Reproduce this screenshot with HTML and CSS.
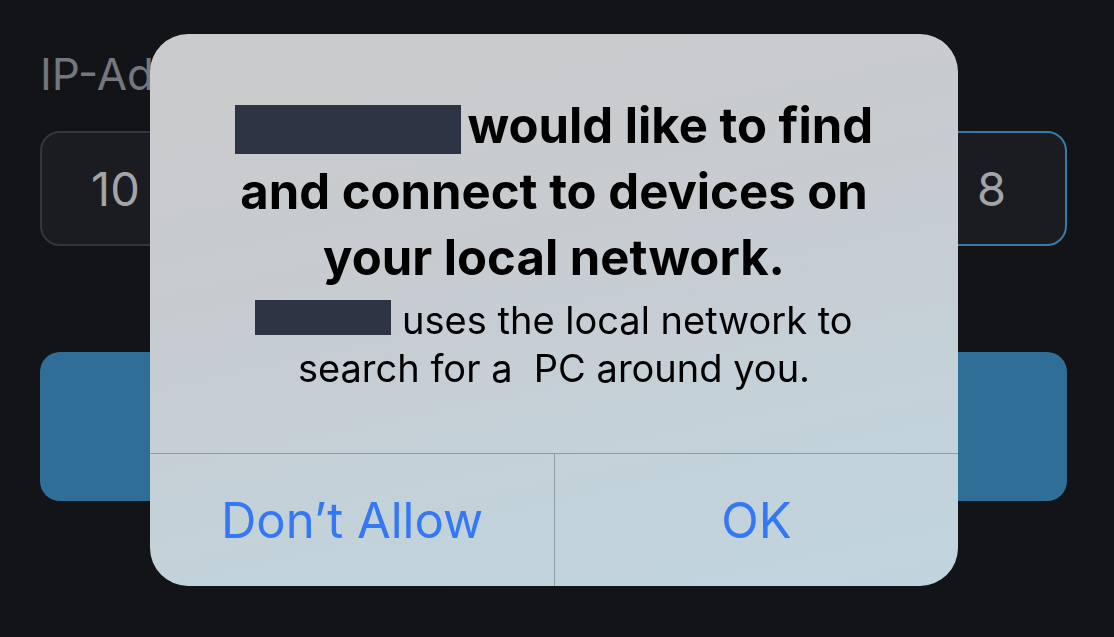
FILE: index.html
```html
<!DOCTYPE html>
<html lang="en">
<head>
  <meta charset="UTF-8">
  <title>Local Network Permission</title>
  <link rel="stylesheet" href="styles.css">
</head>
<body>

  <!-- Form behind the alert -->
  <div class="form">
    <label class="field-label">IP-Address</label>
    <div class="ip-row">
      <div class="ip-box">10</div>
      <div class="ip-box">0</div>
      <div class="ip-box">0</div>
      <div class="ip-box focused">8</div>
    </div>
    <button class="connect">Connect</button>
  </div>

  <!-- System alert -->
  <div class="overlay">
    <div class="alert">
      <div class="alert-body">
        <div class="alert-title"><span class="redact redact-title"></span> would like to find and connect to devices on your local network.</div>
        <div class="alert-message"><span class="redact redact-msg"></span> uses the local network to search for a&nbsp; PC around you.</div>
      </div>
      <div class="alert-actions">
        <button class="alert-btn">Don’t Allow</button>
        <button class="alert-btn">OK</button>
      </div>
    </div>
  </div>

</body>
</html>
```

FILE: styles.css
```css
* {
  box-sizing: border-box;
}

html, body {
  margin: 0;
  height: 100%;
}

body {
  font-family: Inter, "Noto Sans", sans-serif;
  background: #121418;
  overflow: hidden;
}

.form {
  padding: 48px 47px 0 40px;
  display: flex;
  flex-direction: column;
}

.field-label {
  font-size: 44px;
  color: #74777d;
  line-height: 52px;
}

.ip-row {
  margin-top: 31px;
  display: grid;
  grid-template-columns: repeat(4, 151px);
  justify-content: space-between;
}

.ip-box {
  height: 115px;
  border: 2px solid #33363d;
  border-radius: 20px;
  background: #1a1c22;
  color: #a2a4a8;
  font-size: 47px;
  display: flex;
  align-items: center;
  justify-content: center;
}

.ip-box.focused {
  border-color: #3b7aa6;
}

.connect {
  margin-top: 106px;
  height: 149px;
  border: none;
  border-radius: 20px;
  background: #2f6e96;
  color: #ffffff;
  font-family: inherit;
  font-size: 44px;
}

.overlay {
  position: fixed;
  inset: 0;
}

.alert {
  margin: 34px 0 0 150px;
  width: 808px;
  height: 552px;
  border-radius: 38px;
  overflow: hidden;
  background: linear-gradient(168deg, #cbcbcd 0%, #c8cbcf 35%, #c3d2da 75%, #c1d4dd 100%);
  display: flex;
  flex-direction: column;
}

.alert-body {
  height: 420px;
  padding: 59px 76px 0;
  text-align: center;
  color: #000;
  border-bottom: 1px solid #8f9ba3;
}

.alert-title {
  font-size: 49px;
  font-weight: 700;
  line-height: 66px;
}

.alert-message {
  margin-top: 5px;
  font-size: 38px;
  line-height: 48px;
}

.redact {
  display: inline-block;
  background: #2d3545;
  vertical-align: middle;
}

.redact-title {
  width: 226px;
  height: 49px;
  margin-right: -5px;
}

.redact-msg {
  width: 136px;
  height: 35px;
  margin-top: -12px;
}

.alert-actions {
  flex: 1;
  display: grid;
  grid-template-columns: 1fr 1fr;
}

.alert-btn {
  border: none;
  background: transparent;
  color: #3478f6;
  font-family: inherit;
  font-size: 49px;
  padding: 0;
}

.alert-btn + .alert-btn {
  border-left: 1px solid #8f9ba3;
}
```
